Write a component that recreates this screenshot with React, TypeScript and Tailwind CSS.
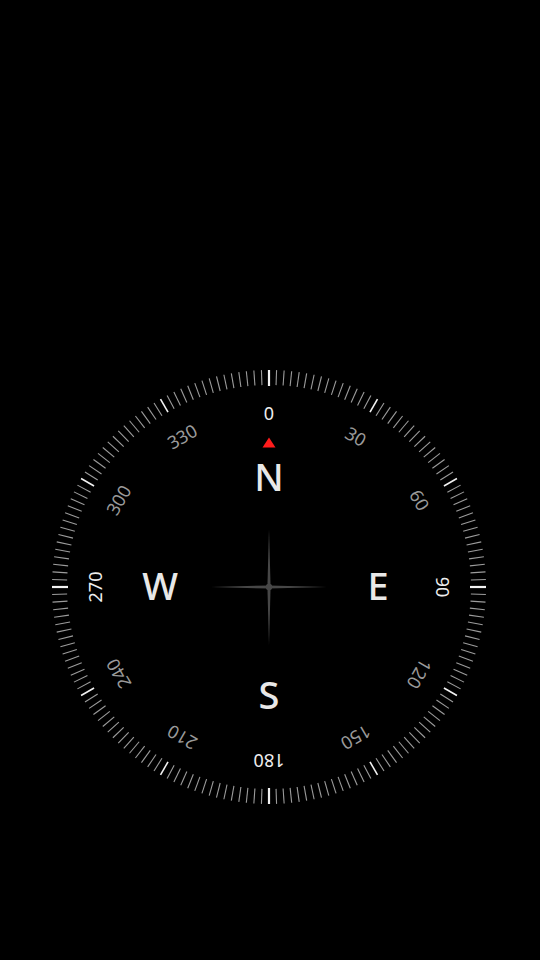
import React from "react";

const ticks = Array.from({ length: 180 }, (_, i) => i * 2);
const labels = [0, 30, 60, 90, 120, 150, 180, 210, 240, 270, 300, 330];
const cardinals = [
  { l: "N", a: 0 },
  { l: "E", a: 90 },
  { l: "S", a: 180 },
  { l: "W", a: 270 },
];

function Compass() {
  const font = "'Noto Sans', Roboto, sans-serif";
  return (
    <svg width="440" height="440" viewBox="-220 -220 440 440" className="block">
      {ticks.map((a) => {
        const major = a % 90 === 0;
        const mid = a % 30 === 0;
        return (
          <line
            key={a}
            x1="0"
            y1={-217}
            x2="0"
            y2={major ? -201 : -202}
            stroke={mid ? "#f2f2f2" : "#9c9c9c"}
            strokeWidth={major ? 2.2 : mid ? 1.6 : 1.1}
            transform={`rotate(${a})`}
          />
        );
      })}
      {labels.map((a) => (
        <g key={a} transform={`rotate(${a}) translate(0 -174)`}>
          <text
            x="0"
            y="0"
            textAnchor="middle"
            dominantBaseline="central"
            fontFamily={font}
            fontSize="18"
            fill={a % 90 === 0 ? "#eeeeee" : "#9a9a9a"}
          >
            {a}
          </text>
        </g>
      ))}
      {cardinals.map((c) => {
        const r = 109;
        const rad = (c.a * Math.PI) / 180;
        return (
          <text
            key={c.l}
            x={r * Math.sin(rad)}
            y={-r * Math.cos(rad) - 2}
            textAnchor="middle"
            dominantBaseline="central"
            fontFamily={font}
            fontSize="38"
            fontWeight="500"
            fill="#e8e8e8"
          >
            {c.l}
          </text>
        );
      })}
      <polygon points="0,-149.5 6.5,-139.5 -6.5,-139.5" fill="#ff1c1c" />
      <polygon points="0,-58 1.6,0 0,58 -1.6,0" fill="#474747" />
      <polygon points="-58,0 0,-1.6 58,0 0,1.6" fill="#474747" />
      <circle cx="0" cy="0" r="3.2" fill="#474747" />
    </svg>
  );
}

export default function App() {
  return (
    <main className="w-[540px] h-[960px] bg-black overflow-hidden">
      <div className="pt-[367px] pl-[49px]">
        <Compass />
      </div>
    </main>
  );
}
